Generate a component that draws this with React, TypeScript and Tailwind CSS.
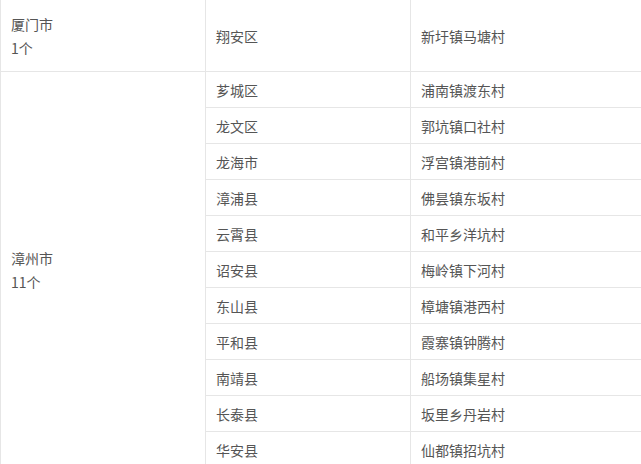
const rows: [string, string][] = [
  ["芗城区", "浦南镇渡东村"],
  ["龙文区", "郭坑镇口社村"],
  ["龙海市", "浮宫镇港前村"],
  ["漳浦县", "佛昙镇东坂村"],
  ["云霄县", "和平乡洋坑村"],
  ["诏安县", "梅岭镇下河村"],
  ["东山县", "樟塘镇港西村"],
  ["平和县", "霞寨镇钟腾村"],
  ["南靖县", "船场镇集星村"],
  ["长泰县", "坂里乡丹岩村"],
  ["华安县", "仙都镇招坑村"],
]

const cell = "border border-[#e6e6e6] pl-[10px] align-middle"

export default function App() {
  return (
    <div
      className="h-[464px] w-[641px] overflow-hidden bg-white text-[14px] leading-6 text-[#555]"
      style={{ fontFamily: '"Noto Sans CJK SC", "Liberation Sans", sans-serif' }}
    >
      <table className="-mt-px w-[660px] table-fixed border-collapse">
        <colgroup>
          <col className="w-[205px]" />
          <col className="w-[205px]" />
          <col />
        </colgroup>
        <tbody>
          <tr className="h-[72px]">
            <td className={cell}>
              <div>厦门市</div>
              <div>1个</div>
            </td>
            <td className={cell}>翔安区</td>
            <td className={cell}>新圩镇马塘村</td>
          </tr>
          {rows.map(([county, village], i) => (
            <tr key={county} className="h-[36px]">
              {i === 0 && (
                <td className={cell} rowSpan={rows.length}>
                  <div>漳州市</div>
                  <div>11个</div>
                </td>
              )}
              <td className={cell}>{county}</td>
              <td className={cell}>{village}</td>
            </tr>
          ))}
        </tbody>
      </table>
    </div>
  )
}
